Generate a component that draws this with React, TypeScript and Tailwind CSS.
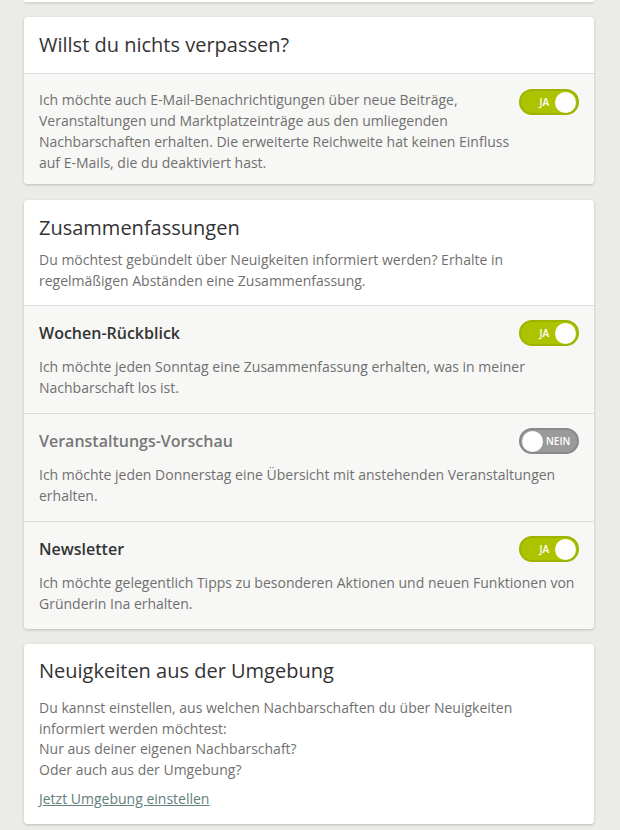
import React from "react";

const font = { fontFamily: "'Open Sans', 'Noto Sans', sans-serif" };

function Toggle({ on }: { on: boolean }) {
  return on ? (
    <div className="flex h-[26px] w-[60px] shrink-0 items-center justify-end gap-[6px] rounded-full border-2 border-[#9db300] bg-[#acc400] pr-[1px]">
      <span className="text-[10px] font-semibold leading-none text-white">JA</span>
      <span className="h-[21px] w-[21px] rounded-full bg-white" />
    </div>
  ) : (
    <div className="flex h-[26px] w-[60px] shrink-0 items-center gap-[3px] rounded-full border-2 border-[#8a8a8a] bg-[#9a9a9a] pl-[1px]">
      <span className="h-[21px] w-[21px] rounded-full bg-white" />
      <span className="text-[10px] font-semibold leading-none text-white">NEIN</span>
    </div>
  );
}

function Row({
  title,
  text,
  on,
}: {
  title: string;
  text: string;
  on: boolean;
}) {
  return (
    <div className="border-t border-[#dcdcda] bg-[#f7f7f5] px-[15px] pt-[14px] pb-[15px]">
      <div className="flex items-center justify-between">
        <p
          className={`text-[16px] font-semibold leading-[24px] ${
            on ? "text-[#333]" : "text-[#777]"
          }`}
        >
          {title}
        </p>
        <Toggle on={on} />
      </div>
      <p className="mt-[11px] text-[14px] leading-[20.5px] text-[#707070]">{text}</p>
    </div>
  );
}

export default function App() {
  return (
    <div className="min-h-[830px] bg-[#ebebe7] pl-[24px] pr-[26px] pb-6" style={font}>
      <div className="h-[2px] rounded-b bg-white shadow-[0_1px_3px_rgba(0,0,0,0.2)]" />

      <section className="mt-[15px] overflow-hidden rounded bg-white shadow-[0_1px_3px_rgba(0,0,0,0.2)]">
        <h2 className="px-[15px] py-[14px] text-[20px] leading-[28px] text-[#333]">
          Willst du nichts verpassen?
        </h2>
        <div className="flex items-start gap-[8px] border-t border-[#dcdcda] bg-[#f7f7f5] px-[15px] pt-[15px] pb-[11px]">
          <p className="flex-1 text-[14px] leading-[21px] text-[#707070]">
            Ich möchte auch E-Mail-Benachrichtigungen über neue Beiträge,
            Veranstaltungen und Marktplatzeinträge aus den umliegenden
            Nachbarschaften erhalten. Die erweiterte Reichweite hat keinen
            Einfluss auf E-Mails, die du deaktiviert hast.
          </p>
          <Toggle on />
        </div>
      </section>

      <section className="mt-[16px] overflow-hidden rounded bg-white shadow-[0_1px_3px_rgba(0,0,0,0.2)]">
        <div className="px-[15px] pt-[14px] pb-[14px]">
          <h2 className="text-[20px] leading-[28px] text-[#333]">Zusammenfassungen</h2>
          <p className="mt-[7px] text-[14px] leading-[21px] text-[#707070]">
            Du möchtest gebündelt über Neuigkeiten informiert werden? Erhalte in
            regelmäßigen Abständen eine Zusammenfassung.
          </p>
        </div>
        <Row
          title="Wochen-Rückblick"
          on
          text="Ich möchte jeden Sonntag eine Zusammenfassung erhalten, was in meiner Nachbarschaft los ist."
        />
        <Row
          title="Veranstaltungs-Vorschau"
          on={false}
          text="Ich möchte jeden Donnerstag eine Übersicht mit anstehenden Veranstaltungen erhalten."
        />
        <Row
          title="Newsletter"
          on
          text="Ich möchte gelegentlich Tipps zu besonderen Aktionen und neuen Funktionen von Gründerin Ina erhalten."
        />
      </section>

      <section className="mt-[15px] rounded bg-white px-[15px] pt-[13px] pb-[14px] shadow-[0_1px_3px_rgba(0,0,0,0.2)]">
        <h2 className="text-[20px] leading-[28px] text-[#333]">
          Neuigkeiten aus der Umgebung
        </h2>
        <p className="mt-[13px] text-[14px] leading-[20.7px] text-[#707070]">
          Du kannst einstellen, aus welchen Nachbarschaften du über Neuigkeiten
          informiert werden möchtest:
          <br />
          Nur aus deiner eigenen Nachbarschaft?
          <br />
          Oder auch aus der Umgebung?
        </p>
        <a href="#" className="mt-[7px] inline-block text-[14px] leading-[21px] text-[#62807c] underline">
          Jetzt Umgebung einstellen
        </a>
      </section>
    </div>
  );
}
